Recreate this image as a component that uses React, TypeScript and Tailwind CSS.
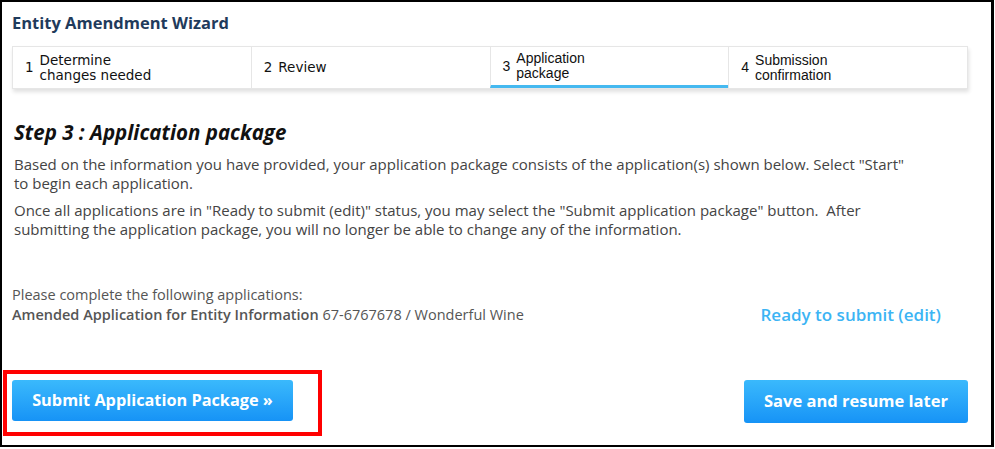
import React from "react";

const steps = [
  { n: "1", label: ["Determine", "changes needed"], font: "font-['DejaVu_Sans',sans-serif] text-[13.5px]" },
  { n: "2", label: ["Review"], font: "font-['DejaVu_Sans',sans-serif] text-[13.5px]" },
  { n: "3", label: ["Application", "package"], font: "font-['Liberation_Sans',Arial,sans-serif] text-[14px]", active: true },
  { n: "4", label: ["Submission", "confirmation"], font: "font-['Liberation_Sans',Arial,sans-serif] text-[14px]" },
];

export default function App() {
  return (
    <div className="h-[449px] w-[995px] bg-white">
      <div className="flex h-[447px] w-[994px] flex-col border-t-2 border-r-[3px] border-b-2 border-l-2 border-black font-['Open_Sans',sans-serif] text-[#444]">
        <h1 className="pl-[10px] pt-[11px] text-[16.5px] font-bold leading-5 text-[#1f3b5c]">Entity Amendment Wizard</h1>

        <div className="ml-[10px] mt-[13px] flex h-[43px] w-[956px] border border-[#e6e6e6] bg-white shadow-[1px_3px_4px_rgba(0,0,0,0.12)]">
          {steps.map((s, i) => (
            <div
              key={s.n}
              className={`flex flex-1 items-center gap-[6px] pl-[12px] text-[#111] ${i > 0 ? "border-l border-[#e6e6e6]" : ""} ${s.active ? "border-b-[3px] border-b-[#45b9f0]" : ""} ${s.font}`}
            >
              <span>{s.n}</span>
              <span className="flex flex-col">
                {s.label.map((l) => (
                  <span key={l} className="leading-[15px]">
                    {l}
                  </span>
                ))}
              </span>
            </div>
          ))}
        </div>

        <div className="pl-[12px] pr-[20px]">
          <h2 className="mt-[31px] text-[20.5px] font-bold italic leading-6 text-[#111]">
            Step 3 : Application package
          </h2>
          <p className="mt-[11px] text-[15px] leading-[19px]">
            Based on the information you have provided, your application package consists of the application(s) shown below. Select "Start"
            <br />
            to begin each application.
          </p>
          <p className="mt-[8px] text-[15px] leading-[19px]">
            Once all applications are in "Ready to submit (edit)" status, you may select the "Submit application package" button.&nbsp; After
            <br />
            submitting the application package, you will no longer be able to change any of the information.
          </p>
        </div>

        <div className="mt-[46px] flex items-end pl-[10px] pr-[50px]">
          <div className="flex-1 text-[14.5px] leading-5 text-[#555]">
            <p>Please complete the following applications:</p>
            <p>
              <span className="font-semibold">Amended Application for Entity Information</span> 67-6767678 / Wonderful Wine
            </p>
          </div>
          <a className="text-[17px] font-semibold leading-5 text-[#3cb4f4]">Ready to submit (edit)</a>
        </div>

        <div className="mt-auto mb-[9px] flex items-end justify-between pl-px pr-[23px]">
          <div className="border-4 border-[#ff0000] pt-[6px] pr-[25px] pb-[11px] pl-[5px]">
            <button className="h-[41px] w-[281px] rounded-[3px] bg-gradient-to-b from-[#3ab9fc] to-[#1693f6] text-[16.3px] font-bold text-white">
              Submit Application Package »
            </button>
          </div>
          <button className="mb-[13px] h-[43px] w-[224px] rounded-[3px] bg-gradient-to-b from-[#3ab9fc] to-[#1693f6] text-[16.5px] font-bold text-white">
            Save and resume later
          </button>
        </div>
      </div>
    </div>
  );
}
